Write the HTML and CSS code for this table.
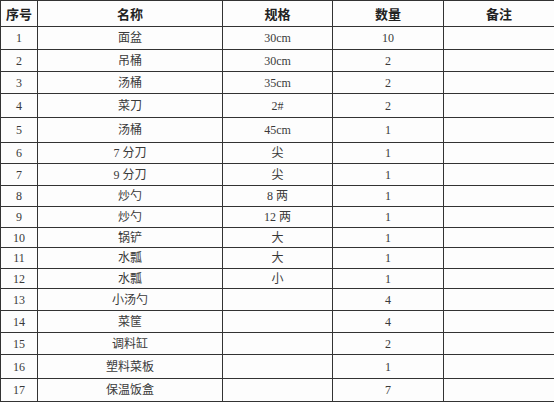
FILE: index.html
```html
<!DOCTYPE html>
<html lang="zh-CN">
<head>
<meta charset="utf-8">
<title>厨具清单</title>
<link rel="stylesheet" href="styles.css">
</head>
<body>
<table class="sheet">
  <colgroup>
    <col class="c-no">
    <col class="c-name">
    <col class="c-spec">
    <col class="c-qty">
    <col class="c-note">
  </colgroup>
  <thead>
    <tr class="h26"><th>序号</th><th>名称</th><th>规格</th><th>数量</th><th>备注</th></tr>
  </thead>
  <tbody>
    <tr class="h23"><td>1</td><td>面盆</td><td>30cm</td><td>10</td><td></td></tr>
    <tr class="h22"><td>2</td><td>吊桶</td><td>30cm</td><td>2</td><td></td></tr>
    <tr class="h22"><td>3</td><td>汤桶</td><td>35cm</td><td>2</td><td></td></tr>
    <tr class="h24"><td>4</td><td>菜刀</td><td>2#</td><td>2</td><td></td></tr>
    <tr class="h25"><td>5</td><td>汤桶</td><td>45cm</td><td>1</td><td></td></tr>
    <tr class="h21"><td>6</td><td>7 分刀</td><td>尖</td><td>1</td><td></td></tr>
    <tr class="h22"><td>7</td><td>9 分刀</td><td>尖</td><td>1</td><td></td></tr>
    <tr class="h21"><td>8</td><td>炒勺</td><td>8 两</td><td>1</td><td></td></tr>
    <tr class="h21"><td>9</td><td>炒勺</td><td>12 两</td><td>1</td><td></td></tr>
    <tr class="h20"><td>10</td><td>锅铲</td><td>大</td><td>1</td><td></td></tr>
    <tr class="h21"><td>11</td><td>水瓢</td><td>大</td><td>1</td><td></td></tr>
    <tr class="h20"><td>12</td><td>水瓢</td><td>小</td><td>1</td><td></td></tr>
    <tr class="h22"><td>13</td><td>小汤勺</td><td></td><td>4</td><td></td></tr>
    <tr class="h22"><td>14</td><td>菜筐</td><td></td><td>4</td><td></td></tr>
    <tr class="h22"><td>15</td><td>调料缸</td><td></td><td>2</td><td></td></tr>
    <tr class="h24"><td>16</td><td>塑料菜板</td><td></td><td>1</td><td></td></tr>
    <tr class="h23"><td>17</td><td>保温饭盒</td><td></td><td>7</td><td></td></tr>
  </tbody>
</table>
</body>
</html>
```

FILE: styles.css
```css
html, body {
  margin: 0;
  padding: 0;
  background: #fdfdfd;
}

.sheet {
  width: 554px;
  table-layout: fixed;
  border-collapse: collapse;
  font-family: "Liberation Serif", "Noto Sans CJK SC", serif;
  font-size: 12px;
  color: #3a3a3a;
}

.c-no { width: 37px; }
.c-name { width: 185px; }
.c-spec { width: 110px; }
.c-qty { width: 111px; }
.c-note { width: 111px; }

.sheet th,
.sheet td {
  border: 1px solid #333;
  padding: 0;
  text-align: center;
  vertical-align: middle;
  line-height: 14px;
  white-space: nowrap;
}

.sheet th {
  font-family: "Noto Sans CJK SC", sans-serif;
  font-weight: bold;
  font-size: 13px;
  color: #222;
}

.h20 { height: 20px; }
.h21 { height: 21px; }
.h22 { height: 22px; }
.h23 { height: 23px; }
.h24 { height: 24px; }
.h25 { height: 25px; }
.h26 { height: 26px; }
```
